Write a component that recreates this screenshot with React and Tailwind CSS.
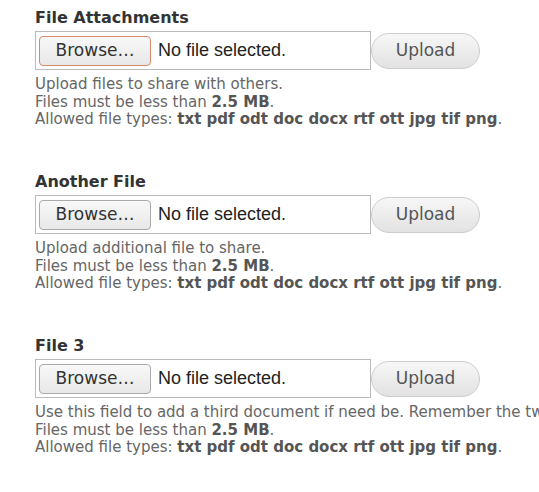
const types = 'txt pdf odt doc docx rtf ott jpg tif png';

const fields = [
  { label: 'File Attachments', help: 'Upload files to share with others.', focused: true },
  { label: 'Another File', help: 'Upload additional file to share.' },
  {
    label: 'File 3',
    help: 'Use this field to add a third document if need be. Remember the twenty page limit applies to all files.',
  },
];

function FileField({ label, help, focused }) {
  return (
    <div className="mb-[43.5px]">
      <label className="block text-[16px] leading-[20px] font-bold text-[#333]">{label}</label>
      <div className="mt-[3px] flex items-center">
        <div className="flex h-[39px] w-[336px] items-center border border-[#bbb] bg-white pl-[3px]">
          <button
            className={
              'h-[30px] w-[112px] rounded-[4px] border bg-gradient-to-b from-[#f8f8f8] to-[#e8e8e8] text-[17px] text-[#333] ' +
              (focused ? 'border-[#d9886a]' : 'border-[#aaa]')
            }
          >
            Browse…
          </button>
          <span className="ml-[7px] font-['Liberation_Sans',Arial,sans-serif] text-[18px] text-[#222]">
            No file selected.
          </span>
        </div>
        <button className="h-[36px] w-[109px] rounded-full border border-[#ccc] bg-gradient-to-b from-[#f7f7f7] to-[#e2e2e2] text-[17px] text-[#555]">
          Upload
        </button>
      </div>
      <div className="mt-[6px] whitespace-nowrap text-[15px] leading-[17.5px] text-[#666]">
        <p>{help}</p>
        <p>
          Files must be less than <strong className="font-bold text-[#555]">2.5 MB</strong>.
        </p>
        <p>
          Allowed file types: <strong className="font-bold text-[#555]">{types}</strong>.
        </p>
      </div>
    </div>
  );
}

export default function App() {
  return (
    <div className="h-[492px] w-[539px] overflow-hidden bg-white pl-[35px] pt-[8px] font-['DejaVu_Sans',sans-serif]">
      {fields.map((f) => (
        <FileField key={f.label} {...f} />
      ))}
    </div>
  );
}
